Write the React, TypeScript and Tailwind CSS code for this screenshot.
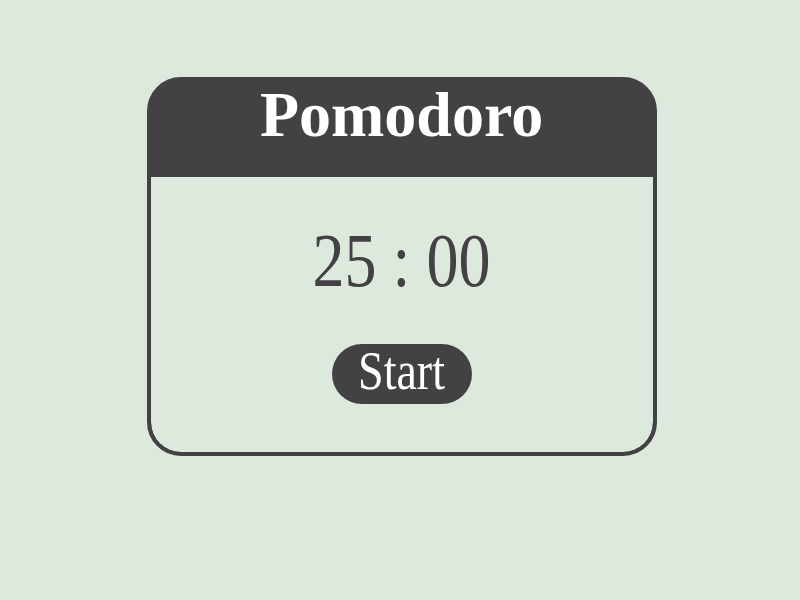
export default function App() {
  return (
    <div className="min-h-screen w-full bg-[#dce9dc] flex justify-center pt-[77px] pl-[3px] font-['Liberation_Serif','Times_New_Roman',serif]">
      <div className="w-[510px] h-[379px] border-4 border-[#434144] bg-[#434144] rounded-[34px] overflow-hidden flex flex-col">
        {/* header */}
        <div className="h-[96px] shrink-0 pt-[2px] text-center">
          <h1 className="text-[64px] leading-[64px] font-bold text-white">
            Pomodoro
          </h1>
        </div>

        {/* timer */}
        <div className="flex-1 bg-[#dce9dc] rounded-b-[30px] flex flex-col items-center pt-[52px]">
          <div className="inline-block scale-y-[1.2] text-[64px] leading-[64px] text-[#434144]">
            25 : 00
          </div>

          <button className="mt-[51px] w-[140px] h-[60px] rounded-full bg-[#434144] text-white pt-[4px] flex justify-center items-start">
            <span className="inline-block scale-y-[1.2] text-[46px] leading-[46px]">
              Start
            </span>
          </button>
        </div>
      </div>
    </div>
  );
}
